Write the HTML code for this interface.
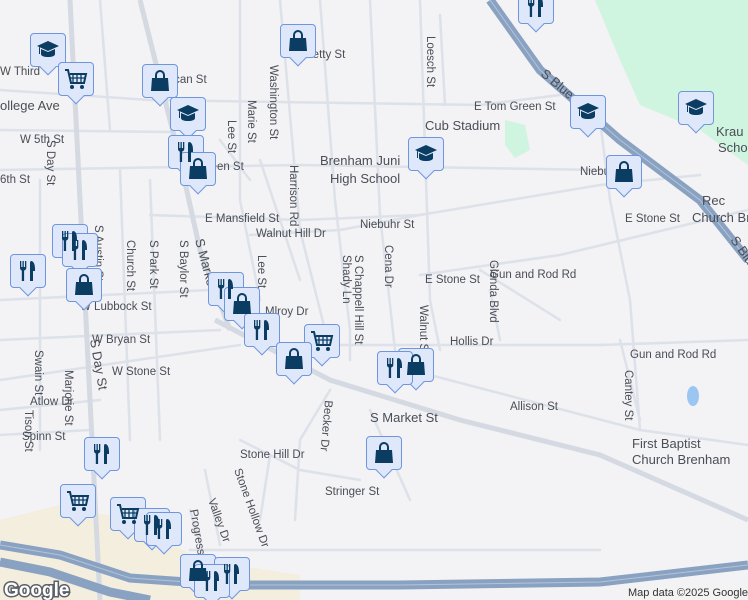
<!DOCTYPE html>
<html><head><meta charset="utf-8"><style>
html,body{margin:0;padding:0;overflow:hidden;width:748px;height:600px}
body{position:relative;background:#f3f2f4;font-family:"Liberation Sans",sans-serif}
svg.map{position:absolute;left:0;top:0}
.m{position:absolute;width:36px;height:34px;background:#dfe8fb;border:1.5px solid #6f96dc;border-radius:4px;box-sizing:border-box}
.m:after{content:"";position:absolute;left:11px;bottom:-7px;width:11px;height:11px;background:#dfe8fb;border-right:1.5px solid #6f96dc;border-bottom:1.5px solid #6f96dc;transform:rotate(45deg)}
.m svg{position:absolute;left:5px;top:4px;width:24px;height:24px;z-index:1}
</style></head><body>
<svg class="map" width="748" height="600" viewBox="0 0 748 600">
<path d="M595 0 L748 0 L748 165 L700 130 L640 105 L620 60 Z" fill="#cff5e0"/>
<path d="M505 120 L525 125 L530 150 L515 158 L505 145Z" fill="#cff5e0"/>
<path d="M0 520 L60 505 L130 520 L200 560 L300 575 L300 600 L0 600Z" fill="#f4ecd9" opacity=".8"/>
<ellipse cx="693" cy="396" rx="6" ry="10" fill="#9cc6f2"/>
<g fill="none" stroke="#dde1e9" stroke-width="2.5" stroke-linecap="round">
<path d="M0 90 L150 100 L480 105 L560 95"/><path d="M0 130 L170 132"/><path d="M0 170 L300 165 L600 170"/>
<path d="M150 215 L300 220 L420 215 L600 185 L700 175"/><path d="M250 235 L340 230 L420 215"/>
<path d="M0 300 L210 290"/><path d="M0 340 L220 330"/><path d="M0 380 L240 345"/><path d="M0 410 L100 400"/>
<path d="M0 435 L90 430"/><path d="M290 345 L430 345 L480 345"/><path d="M420 275 L560 255 L748 210"/>
<path d="M480 270 L560 320"/><path d="M460 345 L600 345 L748 340"/><path d="M430 375 L640 430 L748 445"/>
<path d="M100 0 L110 130"/><path d="M40 180 L40 450"/><path d="M120 170 L130 440"/><path d="M150 180 L160 440"/>
<path d="M240 0 L240 200 L260 300"/><path d="M280 0 L300 230 L330 350"/><path d="M320 0 L335 200 L350 330 L350 360"/>
<path d="M370 0 L380 215 L395 350"/><path d="M420 0 L430 300 L440 350"/><path d="M440 15 L445 105"/>
<path d="M490 290 L500 340"/><path d="M600 120 L610 200 L630 300 L640 430"/><path d="M620 340 L640 420"/>
<path d="M330 390 L300 440 L295 520"/><path d="M240 440 L300 470 L360 480"/><path d="M370 410 L410 500"/>
<path d="M270 455 L260 520"/><path d="M205 470 L220 545"/><path d="M190 510 L205 560"/><path d="M190 550 L600 550"/>
<path d="M220 140 L250 180"/><path d="M260 160 L300 280"/>
</g>
<g fill="none" stroke="#d4d9e2" stroke-width="5">
<path d="M215 320 L330 380 L460 420 L600 455 L748 520"/>
<path d="M140 0 L180 160 L200 250 L230 330"/>
<path d="M70 0 L100 600"/>
</g>
<g fill="none" stroke="#8aa2c2" stroke-width="9">
<path d="M490 0 L540 70 L620 140 L700 200 L748 260"/>
<path d="M0 545 L60 555 L130 578 L230 585 L400 585 L600 582 L748 565"/>
<path d="M0 562 L50 572 L110 592 L150 600"/>
</g>
<g fill="none" stroke="#b4c3d8" stroke-width="1">
<path d="M490 0 L540 70 L620 140 L700 200 L748 260"/>
<path d="M0 545 L60 555 L130 578 L230 585 L400 585 L600 582 L748 565"/>
</g>
<g font-size="11.5" fill="#4a4e57">
<text x="160" y="83">Pecan St</text><text x="305" y="58">Betty St</text><text x="0" y="75">W Third</text>
<text x="0" y="110" font-size="13">ollege Ave</text><text x="20" y="143">W 5th St</text><text x="0" y="183">6th St</text>
<text x="427" y="36" transform="rotate(90 427 36)">Loesch St</text><text x="474" y="110">E Tom Green St</text>
<text x="425" y="130" font-size="13">Cub Stadium</text><text x="320" y="165" font-size="13">Brenham Juni</text><text x="330" y="183" font-size="13">High School</text>
<text x="185" y="170">m Green St</text><text x="205" y="222">E Mansfield St</text><text x="256" y="237">Walnut Hill Dr</text>
<text x="360" y="228">Niebuhr St</text><text x="580" y="175">Niebu</text><text x="625" y="222">E Stone St</text>
<text x="425" y="283">E Stone St</text><text x="490" y="278">Gun and Rod Rd</text><text x="630" y="358">Gun and Rod Rd</text>
<text x="450" y="345">Hollis Dr</text><text x="510" y="410">Allison St</text><text x="370" y="422" font-size="13">S Market St</text>
<text x="632" y="448" font-size="13">First Baptist</text><text x="632" y="464" font-size="13">Church Brenham</text>
<text x="702" y="205" font-size="13">Rec</text><text x="692" y="222" font-size="13">Church Br</text>
<text x="716" y="136" font-size="13">Krau</text><text x="718" y="138" dy="14" font-size="13">Scho</text>
<text x="80" y="310">W Lubbock St</text><text x="92" y="343">W Bryan St</text><text x="112" y="375">W Stone St</text>
<text x="30" y="405">Atlow Dr</text><text x="22" y="440">Spinn St</text><text x="240" y="458">Stone Hill Dr</text>
<text x="325" y="495">Stringer St</text><text x="265" y="315">Mlroy Dr</text>
</g>
<g font-size="11.5" fill="#4a4e57">
<text transform="translate(180 240) rotate(90)">S Baylor St</text><text transform="translate(150 240) rotate(90)">S Park St</text>
<text transform="translate(127 240) rotate(90)">Church St</text><text transform="translate(95 225) rotate(90)">S Austin St</text>
<text transform="translate(47 140) rotate(90)">S Day St</text><text transform="translate(90 340) rotate(80)" font-size="13">S Day St</text>
<text transform="translate(195 240) rotate(75)" font-size="13">S Market</text>
<text transform="translate(248 100) rotate(90)">Marie St</text><text transform="translate(270 65) rotate(90)">Washington St</text>
<text transform="translate(290 165) rotate(90)">Harrison Rd</text><text transform="translate(228 120) rotate(90)">Lee St</text>
<text transform="translate(258 255) rotate(90)">Lee St</text><text transform="translate(343 255) rotate(90)">Shady Ln</text>
<text transform="translate(355 255) rotate(90)">S Chappell Hill St</text><text transform="translate(385 245) rotate(90)">Cena Dr</text>
<text transform="translate(420 305) rotate(90)">Walnut St</text><text transform="translate(490 260) rotate(90)">Glenda Blvd</text>
<text transform="translate(625 370) rotate(90)">Cantey St</text><text transform="translate(35 350) rotate(90)">Swain St</text>
<text transform="translate(65 370) rotate(90)">Marjorie St</text><text transform="translate(25 410) rotate(90)">Tison St</text>
<text transform="translate(325 400) rotate(95)">Becker Dr</text><text transform="translate(234 470) rotate(70)">Stone Hollow Dr</text>
<text transform="translate(208 500) rotate(70)">Valley Dr</text><text transform="translate(190 510) rotate(80)">Progress</text>
<text transform="translate(540 75) rotate(40)" font-size="13">S Blue</text><text transform="translate(730 240) rotate(55)" font-size="13">S Blu</text>
</g>
<text x="4" y="596" font-size="19" font-weight="bold" fill="#fff" stroke="#5b6068" stroke-width="3" paint-order="stroke">Google</text>
<rect x="625" y="584" width="123" height="16" fill="#f3f2f4" opacity=".8"/>
<text x="628" y="596" font-size="11" fill="#333">Map data ©2025 Google</text>
</svg>
<svg width="0" height="0" style="position:absolute;left:0;top:0">
<symbol id="f" viewBox="0 0 24 24"><path fill="#0b3d62" d="M4 2h1.3v6h1.2V2h1.3v6h1.2V2h1.3v7c0 1.3-1 2.3-2.2 2.5V22H5.8V11.5C4.8 11.3 4 10.3 4 9z M15 2c2.5 0 4 3 4 8v2h-2v10h-3V4c0-1 .5-2 1-2z"/></symbol>
<symbol id="b" viewBox="0 0 24 24"><path fill="none" stroke="#0b3d62" stroke-width="2" d="M8 9V6a4 4 0 0 1 8 0v3"/><path fill="#0b3d62" d="M4 9h16l1 13H3z"/></symbol>
<symbol id="s" viewBox="0 0 24 24"><path fill="#0b3d62" d="M12 3L1 8l11 5 11-5z M5 11v5c0 2 3 3 7 3s7-1 7-3v-5l-7 3z M3 9h1v7H3z"/></symbol>
<symbol id="c" viewBox="0 0 24 24"><path fill="none" stroke="#0b3d62" stroke-width="2" d="M1 3h3l3 13h13l2-9H6"/><path stroke="#0b3d62" stroke-width="1.3" d="M9 7v9M13 7v9M17 7v9M6 11h15"/><circle cx="8" cy="20" r="2" fill="#0b3d62"/><circle cx="18" cy="20" r="2" fill="#0b3d62"/></symbol>
</svg>
<div class="m" style="left:518px;top:-10px"><svg><use href="#f"/></svg></div>
<div class="m" style="left:280px;top:24px"><svg><use href="#b"/></svg></div>
<div class="m" style="left:30px;top:33px"><svg><use href="#s"/></svg></div>
<div class="m" style="left:58px;top:62px"><svg><use href="#c"/></svg></div>
<div class="m" style="left:142px;top:64px"><svg><use href="#b"/></svg></div>
<div class="m" style="left:170px;top:97px"><svg><use href="#s"/></svg></div>
<div class="m" style="left:570px;top:95px"><svg><use href="#s"/></svg></div>
<div class="m" style="left:678px;top:91px"><svg><use href="#s"/></svg></div>
<div class="m" style="left:168px;top:135px"><svg><use href="#f"/></svg></div>
<div class="m" style="left:180px;top:152px"><svg><use href="#b"/></svg></div>
<div class="m" style="left:408px;top:137px"><svg><use href="#s"/></svg></div>
<div class="m" style="left:606px;top:155px"><svg><use href="#b"/></svg></div>
<div class="m" style="left:52px;top:224px"><svg><use href="#f"/></svg></div>
<div class="m" style="left:62px;top:233px"><svg><use href="#f"/></svg></div>
<div class="m" style="left:10px;top:254px"><svg><use href="#f"/></svg></div>
<div class="m" style="left:66px;top:268px"><svg><use href="#b"/></svg></div>
<div class="m" style="left:208px;top:272px"><svg><use href="#f"/></svg></div>
<div class="m" style="left:224px;top:287px"><svg><use href="#b"/></svg></div>
<div class="m" style="left:244px;top:313px"><svg><use href="#f"/></svg></div>
<div class="m" style="left:304px;top:324px"><svg><use href="#c"/></svg></div>
<div class="m" style="left:276px;top:342px"><svg><use href="#b"/></svg></div>
<div class="m" style="left:398px;top:348px"><svg><use href="#b"/></svg></div>
<div class="m" style="left:377px;top:351px"><svg><use href="#f"/></svg></div>
<div class="m" style="left:84px;top:437px"><svg><use href="#f"/></svg></div>
<div class="m" style="left:366px;top:436px"><svg><use href="#b"/></svg></div>
<div class="m" style="left:60px;top:484px"><svg><use href="#c"/></svg></div>
<div class="m" style="left:110px;top:497px"><svg><use href="#c"/></svg></div>
<div class="m" style="left:134px;top:508px"><svg><use href="#f"/></svg></div>
<div class="m" style="left:146px;top:512px"><svg><use href="#f"/></svg></div>
<div class="m" style="left:180px;top:554px"><svg><use href="#b"/></svg></div>
<div class="m" style="left:214px;top:557px"><svg><use href="#f"/></svg></div>
<div class="m" style="left:194px;top:564px"><svg><use href="#f"/></svg></div>
</body></html>
